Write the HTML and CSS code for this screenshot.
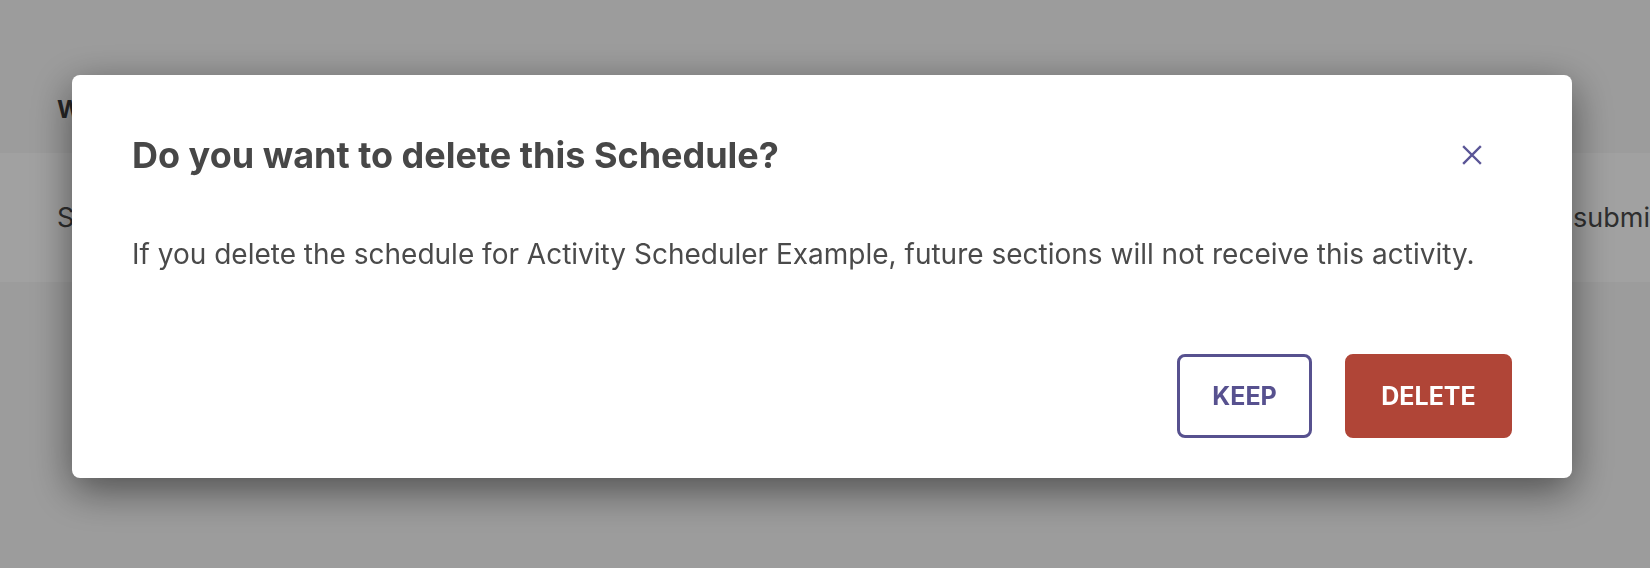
FILE: index.html
```html
<!DOCTYPE html>
<html lang="en">
<head>
    <meta charset="UTF-8">
    <meta name="viewport" content="width=device-width, initial-scale=1.0">
    <title>Delete Schedule</title>
    <link rel="stylesheet" href="styles.css">
</head>
<body>
    <div class="page">
        <div class="page-header">
            <h1>Weekly Activity Schedules</h1>
        </div>
        <div class="schedule-row">
            <span class="schedule-name">Schedule for Activity Scheduler Example</span>
            <span class="schedule-status">submissions</span>
        </div>
    </div>

    <div class="overlay">
        <div class="modal" role="dialog" aria-labelledby="modal-title">
            <div class="modal-header">
                <h2 id="modal-title">Do you want to delete this Schedule?</h2>
                <button class="close-btn" aria-label="Close">
                    <svg width="20" height="20" viewBox="0 0 20 20">
                        <path d="M2 2 L18 18 M18 2 L2 18" stroke="#5a5596" stroke-width="2.4" stroke-linecap="square" fill="none"/>
                    </svg>
                </button>
            </div>
            <p class="modal-text">If you delete the schedule for Activity Scheduler Example, future sections will not receive this activity.</p>
            <div class="modal-actions">
                <button class="btn btn-keep">KEEP</button>
                <button class="btn btn-delete">DELETE</button>
            </div>
        </div>
    </div>
</body>
</html>
```

FILE: styles.css
```css
body {
    font-family: Inter, 'Noto Sans', sans-serif;
    background-color: #f7f7f7;
    margin: 0;
    height: 568px;
    overflow: hidden;
}

.page-header {
    height: 153px;
    padding: 95px 0 0 57px;
    box-sizing: border-box;
}

.page-header h1 {
    margin: 0;
    font-size: 24px;
    font-weight: 700;
    color: #3c3c3c;
}

.schedule-row {
    height: 129px;
    background-color: #fff;
    display: grid;
    grid-template-columns: 1516px auto;
    align-items: center;
    padding-left: 57px;
    font-size: 27px;
    color: #4a4a4a;
    white-space: nowrap;
    overflow: hidden;
}

.overlay {
    position: fixed;
    top: 0;
    left: 0;
    right: 0;
    bottom: 0;
    background-color: rgba(0, 0, 0, 0.37);
}

.modal {
    background-color: #fff;
    width: 1500px;
    height: 403px;
    margin: 75px 0 0 72px;
    padding: 58px 60px 40px 60px;
    box-sizing: border-box;
    border-radius: 8px;
    box-shadow: 0 12px 40px rgba(0, 0, 0, 0.5);
    display: flex;
    flex-direction: column;
}

.modal-header {
    display: flex;
    justify-content: space-between;
    align-items: center;
}

.modal-header h2 {
    margin: 0;
    font-size: 36px;
    line-height: 44px;
    font-weight: 700;
    color: #474747;
}

.close-btn {
    width: 40px;
    height: 40px;
    margin-right: 20px;
    padding: 0;
    border: none;
    background: none;
    cursor: pointer;
    display: flex;
    align-items: center;
    justify-content: center;
}

.modal-text {
    margin: 59px 0 0;
    font-size: 28px;
    line-height: 36px;
    color: #4a4a4a;
}

.modal-actions {
    margin-top: auto;
    display: flex;
    justify-content: flex-end;
    gap: 33px;
}

.btn {
    height: 84px;
    border-radius: 8px;
    font-family: Inter, 'Noto Sans', sans-serif;
    font-size: 25px;
    font-weight: 700;
    border: 3px solid transparent;
    cursor: pointer;
}

.btn-keep {
    background-color: #fff;
    border-color: #57518f;
    color: #57518f;
    width: 135px;
}

.btn-delete {
    background-color: #b04537;
    border-color: #b04537;
    color: #fff;
    width: 167px;
}
```
